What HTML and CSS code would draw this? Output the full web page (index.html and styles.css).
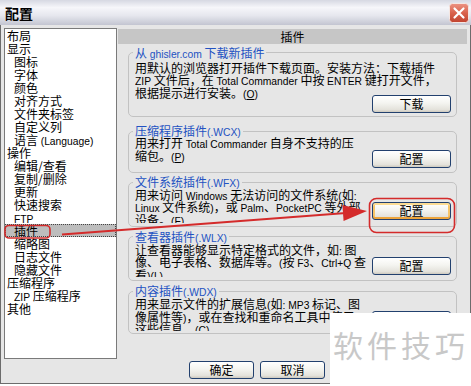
FILE: index.html
```html
<!DOCTYPE html>
<html lang="zh-CN">
<head>
<meta charset="utf-8">
<title>配置</title>
<link rel="stylesheet" href="styles.css">
</head>
<body>
<div class="window">
  <div class="titlebar">
    <span class="title">配置</span>
    <svg class="close" width="20" height="20" viewBox="0 0 20 20">
      <defs>
        <linearGradient id="cg" x1="0" y1="0" x2="0" y2="1">
          <stop offset="0" stop-color="#ec9484"/>
          <stop offset="0.5" stop-color="#d9624c"/>
          <stop offset="1" stop-color="#c0432f"/>
        </linearGradient>
      </defs>
      <rect x="0.5" y="0.5" width="19" height="19" rx="3" fill="url(#cg)" stroke="#f4e6e2"/>
      <path d="M5.5 5.5 L14.5 14.5 M14.5 5.5 L5.5 14.5" stroke="#fff" stroke-width="2.2" stroke-linecap="round"/>
    </svg>
  </div>
  <div class="frame">
    <div class="main">
      <ul class="tree">
        <li>布局</li>
        <li>显示</li>
        <li class="sub">图标</li>
        <li class="sub">字体</li>
        <li class="sub">颜色</li>
        <li class="sub">对齐方式</li>
        <li class="sub">文件夹标签</li>
        <li class="sub">自定义列</li>
        <li class="sub">语言 <span class="en">(Language)</span></li>
        <li>操作</li>
        <li class="sub">编辑/查看</li>
        <li class="sub">复制/删除</li>
        <li class="sub">更新</li>
        <li class="sub">快速搜索</li>
        <li class="sub"><span class="en">FTP</span></li>
        <li class="sub sel">插件</li>
        <li class="sub">缩略图</li>
        <li class="sub">日志文件</li>
        <li class="sub">隐藏文件</li>
        <li>压缩程序</li>
        <li class="sub"><span class="en">ZIP</span> 压缩程序</li>
        <li>其他</li>
      </ul>
      <div class="panel">
        <div class="panel-head">插件</div>
        <fieldset class="group g1">
          <legend>从 <span class="en">ghisler.com</span> 下载新插件</legend>
          <div class="gbody">
            <p class="gtext">用默认的浏览器打开插件下载页面。安装方法：下载插件<br><span class="en">ZIP</span> 文件后，在 <span class="en">Total Commander</span> 中按 <span class="en">ENTER</span> 键打开文件，<br>根据提示进行安装。<span class="en">(<u>O</u>)</span></p>
            <button class="btn">下载</button>
          </div>
        </fieldset>
        <fieldset class="group g2">
          <legend>压缩程序插件<span class="en">(.WCX)</span></legend>
          <div class="gbody">
            <p class="gtext">用来打开 <span class="en">Total Commander</span> 自身不支持的压<br>缩包。<span class="en">(<u>P</u>)</span></p>
            <button class="btn">配置</button>
          </div>
        </fieldset>
        <fieldset class="group g3">
          <legend>文件系统插件<span class="en">(.WFX)</span></legend>
          <div class="gbody">
            <p class="gtext">用来访问 <span class="en">Windows</span> 无法访问的文件系统<span class="en">(</span>如<span class="en">:</span><br><span class="en">Linux</span> 文件系统<span class="en">)</span>，或 <span class="en">Palm</span>、<span class="en">PocketPC</span> 等外部<br>设备。<span class="en">(<u>F</u>)</span></p>
            <button class="btn hot">配置</button>
          </div>
        </fieldset>
        <fieldset class="group g4">
          <legend>查看器插件<span class="en">(.WLX)</span></legend>
          <div class="gbody">
            <p class="gtext">让查看器能够显示特定格式的文件，如<span class="en">:</span> 图<br>像、电子表格、数据库等。<span class="en">(</span>按 <span class="en">F3</span>、<span class="en">Ctrl+Q</span> 查<br>看<span class="en">)(<u>L</u>)</span></p>
            <button class="btn">配置</button>
          </div>
        </fieldset>
        <fieldset class="group g5">
          <legend>内容插件<span class="en">(.WDX)</span></legend>
          <div class="gbody">
            <p class="gtext">用来显示文件的扩展信息<span class="en">(</span>如<span class="en">: MP3</span> 标记、图<br>像属性等<span class="en">)</span>，或在查找和重命名工具中使用<br>这些信息。<span class="en">(<u>C</u>)</span></p>
            <button class="btn">配置</button>
          </div>
        </fieldset>
      </div>
    </div>
    <div class="actions">
      <button class="btn">确定</button>
      <button class="btn">取消</button>
      <button class="btn">帮助</button>
    </div>
  </div>
  <div class="watermark">软件技巧</div>
  <svg class="annot" width="471" height="386" viewBox="0 0 471 386">
    <rect x="5" y="225.5" width="45" height="12.5" rx="4" fill="none" stroke="#d42b2b" stroke-width="1.6"/>
    <line x1="62" y1="234.5" x2="346" y2="213" stroke="#d42b2b" stroke-width="2"/>
    <polygon points="367,211 342.4,205 343.6,221" fill="#d42b2b"/>
    <rect x="369.5" y="198.5" width="85" height="34" rx="7" fill="none" stroke="#d42b2b" stroke-width="1.6"/>
  </svg>
</div>
</body>
</html>
```

FILE: styles.css
```css
html, body {
  margin: 0;
  padding: 0;
  background: #ffffff;
}

body {
  font-family: "Noto Sans CJK SC", "Noto Sans", sans-serif;
  font-size: 12px;
  color: #000;
}

.en {
  font-family: "Liberation Sans", Arial, sans-serif;
  font-size: 10.3px;
  line-height: 8px;
}

.window {
  position: relative;
  width: 471px;
}

.titlebar {
  height: 25px;
  box-sizing: border-box;
  display: flex;
  align-items: center;
  justify-content: space-between;
  padding: 0 2px 0 5px;
  background: linear-gradient(#d6d8e2, #f6f6fa 30%, #e6e7ee 62%, #c3c5d1);
}

.title {
  font-weight: bold;
  font-size: 14px;
  line-height: 14px;
}

.close {
  display: block;
}

.frame {
  border: 1px solid #6c6c6c;
  border-top: 0;
  background: #e6e6e6;
  padding: 3px 3px 4px;
  display: flex;
  flex-direction: column;
  gap: 2px;
}

.main {
  display: flex;
  gap: 1px;
  align-items: flex-start;
}

.tree {
  width: 113px;
  height: 331px;
  box-sizing: border-box;
  margin: 0;
  padding: 0;
  list-style: none;
  background: #ffffff;
  border: 1px solid #7a7a7a;
}

.tree li {
  height: 13px;
  line-height: 13px;
  padding-left: 2px;
  white-space: nowrap;
}

.tree li.sub {
  padding-left: 9px;
}

.tree li.sel {
  background: #bdbdbd;
  outline: 1px dotted #444;
  outline-offset: -1px;
}

.panel {
  flex: 1;
  margin-top: 1px;
}

.panel-head {
  height: 15px;
  line-height: 15px;
  background: #c6c6c6;
  text-align: center;
}

.group {
  margin: 0 10px;
  padding: 0 5px 3px 6px;
  border: 1px solid #c2c2c2;
  border-radius: 5px;
  min-width: 0;
}

.group legend {
  padding: 0 2px;
  margin-left: -2px;
  height: 12px;
  line-height: 12px;
  color: #2352c2;
}

.gbody {
  display: grid;
  grid-template-rows: minmax(0, 1fr);
  overflow: hidden;
}

.gbody > * {
  grid-area: 1 / 1;
}

.gtext {
  margin: 0;
  line-height: 12.5px;
  white-space: nowrap;
  align-self: start;
}

.gbody .btn {
  justify-self: end;
  align-self: end;
}

.g1 { margin-top: 2.5px; padding-top: 3.25px; padding-bottom: 3px; }
.g1 .gbody { height: 51.25px; }

.g2 { margin-top: 8px; padding-top: 0; padding-bottom: 4px; }
.g2 .gbody { height: 30.5px; }

.g3 { margin-top: 3.5px; padding-top: 0.75px; padding-bottom: 2.5px; }
.g3 .gbody { height: 34.25px; }
.g3 .btn { margin-bottom: 3px; }

.g4 { margin-top: 4px; padding-top: 1px; padding-bottom: 3px; }
.g4 .gbody { height: 33.3px; }
.g4 .btn { margin-bottom: 1.5px; }

.g5 { margin-top: 4.5px; padding-top: 1px; padding-bottom: 2px; }
.g5 .gbody { height: 32.3px; }
.g5 .btn { margin-bottom: 1.5px; }

.btn {
  width: 79px;
  height: 18px;
  box-sizing: border-box;
  padding: 0;
  border: 1px solid #22406e;
  border-radius: 3px;
  background: linear-gradient(#ffffff, #f4f4f0 45%, #e4e2db 85%, #cdc9be);
  font-family: "Noto Sans CJK SC", sans-serif;
  font-size: 12px;
  line-height: 16px;
  color: #000;
}

.btn.hot {
  box-shadow: inset 0 2px 0 #fcdc94, inset 0 -2px 0 #eda53c, inset 2px 0 0 #f7c56a, inset -2px 0 0 #f7c56a;
}

.actions {
  display: flex;
  gap: 6px;
  padding-left: 185px;
}

.actions .btn {
  width: 65px;
}

.watermark {
  position: absolute;
  right: 0;
  bottom: 0;
  width: 141px;
  height: 71px;
  box-sizing: border-box;
  background: #ffffff;
  padding: 16px 0 0 3px;
  font-size: 30px;
  line-height: 30px;
  letter-spacing: 4px;
  color: #c8c8c8;
  white-space: nowrap;
}

.annot {
  position: absolute;
  left: 0;
  top: 0;
  pointer-events: none;
}
```
